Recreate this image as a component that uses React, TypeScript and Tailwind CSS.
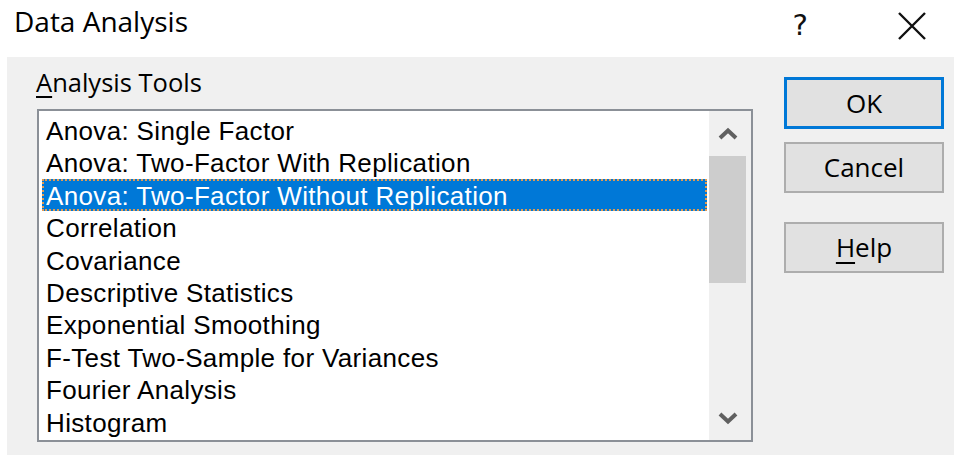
import React from 'react';

const tools = [
    'Anova: Single Factor',
    'Anova: Two-Factor With Replication',
    'Anova: Two-Factor Without Replication',
    'Correlation',
    'Covariance',
    'Descriptive Statistics',
    'Exponential Smoothing',
    'F-Test Two-Sample for Variances',
    'Fourier Analysis',
    'Histogram',
];

const uiFont = { fontFamily: '"Open Sans", "Noto Sans", sans-serif' };
const listFont = { fontFamily: '"Liberation Sans", Arial, sans-serif' };

function Chevron({ down }: { down?: boolean }) {
    return (
        <svg width="20" height="14" viewBox="0 0 20 14" className={down ? 'rotate-180' : ''}>
            <path d="M2 11 L10 3.5 L18 11" fill="none" stroke="#606060" strokeWidth="4" />
        </svg>
    );
}

function DialogButton({ children, focused }: { children: React.ReactNode; focused?: boolean }) {
    return (
        <button
            className={
                focused
                    ? 'w-[160px] h-[52px] bg-[#e1e1e1] border-[3px] border-[#0078d7] text-[26px] text-black flex items-center justify-center'
                    : 'w-[160px] h-[51px] bg-[#e1e1e1] border-2 border-[#adadad] text-[26px] text-black flex items-center justify-center'
            }
            style={uiFont}
        >
            {children}
        </button>
    );
}

export default function App() {
    const selected = 2;

    return (
        <div className="w-[954px] h-[455px] bg-white flex flex-col overflow-hidden">
            {/* title bar */}
            <div className="h-[57px] flex items-start justify-between shrink-0">
                <div className="pl-[14px] pt-[6px] text-[28px] leading-[31px] text-black" style={uiFont}>
                    Data Analysis
                </div>
                <div className="flex items-start pt-[10px]">
                    <span
                        className="text-[29px] leading-[30px] text-[#111] mr-[90px]"
                        style={{ fontFamily: '"DejaVu Sans", sans-serif' }}
                    >
                        ?
                    </span>
                    <svg width="28" height="28" viewBox="0 0 28 28" className="mr-[28px] mt-[2px]">
                        <path d="M1 1 L27 27 M27 1 L1 27" stroke="#111" strokeWidth="2.4" />
                    </svg>
                </div>
            </div>

            {/* dialog body */}
            <div className="flex-1 ml-[7px] bg-[#f0f0f0] flex">
                <div className="pl-[30px]">
                    <div className="pt-[10px] h-[40px] text-[25.5px] leading-[30px] text-black -ml-px" style={uiFont}>
                        <span className="underline underline-offset-[4px] decoration-[2px]">A</span>nalysis Tools
                    </div>
                    <div className="mt-[12px] w-[716px] h-[333px] border-2 border-[#8b9097] bg-white flex">
                        <div className="flex-1 pl-[3px] pt-[3px] pr-[2px]" style={listFont}>
                            {tools.map((t, i) => (
                                <div
                                    key={t}
                                    className={
                                        i === selected
                                            ? 'h-[32.4px] pt-[2px] pl-[4px] leading-[30px] text-[26px] tracking-[0.35px] text-white bg-[#0078d7] outline-2 outline-dotted outline-[#e59b4f] -outline-offset-2'
                                            : 'h-[32.4px] pt-[2px] pl-[4px] leading-[30px] text-[26px] tracking-[0.35px] text-black'
                                    }
                                >
                                    {t}
                                </div>
                            ))}
                        </div>
                        <div className="w-[42px] bg-[#f0f0f0] flex flex-col">
                            <div className="h-[45px] pr-[4px] flex items-center justify-center">
                                <Chevron />
                            </div>
                            <div className="h-[127px] w-[37px] bg-[#cdcdcd]" />
                            <div className="flex-1" />
                            <div className="h-[44px] pr-[4px] flex items-center justify-center">
                                <Chevron down />
                            </div>
                        </div>
                    </div>
                </div>

                <div className="ml-[31px] pt-[20px] flex flex-col">
                    <DialogButton focused>OK</DialogButton>
                    <div className="h-[13px]" />
                    <DialogButton>Cancel</DialogButton>
                    <div className="h-[29px]" />
                    <DialogButton>
                        <span>
                            <span className="underline underline-offset-[5px] decoration-[2px]">H</span>elp
                        </span>
                    </DialogButton>
                </div>
            </div>
        </div>
    );
}
